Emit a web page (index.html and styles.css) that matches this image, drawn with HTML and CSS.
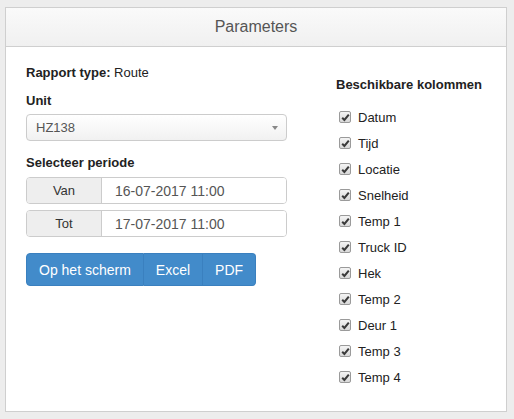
FILE: index.html
```html
<!DOCTYPE html>
<html>
<head>
<meta charset="utf-8">
<link rel="stylesheet" href="styles.css">
</head>
<body>
<div class="panel">
  <div class="panel-heading">Parameters</div>
  <div class="panel-body">
    <div class="col-left">
      <div class="report-type"><b>Rapport type:</b> Route</div>
      <div class="label label-unit">Unit</div>
      <div class="select">
        <span>HZ138</span>
        <span class="caret"></span>
      </div>
      <div class="label label-period">Selecteer periode</div>
      <div class="input-group">
        <span class="addon">Van</span>
        <span class="input">16-07-2017 11:00</span>
      </div>
      <div class="input-group second">
        <span class="addon">Tot</span>
        <span class="input">17-07-2017 11:00</span>
      </div>
      <div class="btn-group">
        <button class="btn">Op het scherm</button>
        <button class="btn">Excel</button>
        <button class="btn">PDF</button>
      </div>
    </div>
    <div class="col-right">
      <div class="label heading-cols">Beschikbare kolommen</div>
      <ul class="checks">
        <li><span class="cb"><svg viewBox="0 0 13 13" width="13" height="13"><path d="M3.2 6.8 L5.4 9 L9.8 3.6" fill="none" stroke="#3a3a3a" stroke-width="2"/></svg></span>Datum</li>
        <li><span class="cb"><svg viewBox="0 0 13 13" width="13" height="13"><path d="M3.2 6.8 L5.4 9 L9.8 3.6" fill="none" stroke="#3a3a3a" stroke-width="2"/></svg></span>Tijd</li>
        <li><span class="cb"><svg viewBox="0 0 13 13" width="13" height="13"><path d="M3.2 6.8 L5.4 9 L9.8 3.6" fill="none" stroke="#3a3a3a" stroke-width="2"/></svg></span>Locatie</li>
        <li><span class="cb"><svg viewBox="0 0 13 13" width="13" height="13"><path d="M3.2 6.8 L5.4 9 L9.8 3.6" fill="none" stroke="#3a3a3a" stroke-width="2"/></svg></span>Snelheid</li>
        <li><span class="cb"><svg viewBox="0 0 13 13" width="13" height="13"><path d="M3.2 6.8 L5.4 9 L9.8 3.6" fill="none" stroke="#3a3a3a" stroke-width="2"/></svg></span>Temp 1</li>
        <li><span class="cb"><svg viewBox="0 0 13 13" width="13" height="13"><path d="M3.2 6.8 L5.4 9 L9.8 3.6" fill="none" stroke="#3a3a3a" stroke-width="2"/></svg></span>Truck ID</li>
        <li><span class="cb"><svg viewBox="0 0 13 13" width="13" height="13"><path d="M3.2 6.8 L5.4 9 L9.8 3.6" fill="none" stroke="#3a3a3a" stroke-width="2"/></svg></span>Hek</li>
        <li><span class="cb"><svg viewBox="0 0 13 13" width="13" height="13"><path d="M3.2 6.8 L5.4 9 L9.8 3.6" fill="none" stroke="#3a3a3a" stroke-width="2"/></svg></span>Temp 2</li>
        <li><span class="cb"><svg viewBox="0 0 13 13" width="13" height="13"><path d="M3.2 6.8 L5.4 9 L9.8 3.6" fill="none" stroke="#3a3a3a" stroke-width="2"/></svg></span>Deur 1</li>
        <li><span class="cb"><svg viewBox="0 0 13 13" width="13" height="13"><path d="M3.2 6.8 L5.4 9 L9.8 3.6" fill="none" stroke="#3a3a3a" stroke-width="2"/></svg></span>Temp 3</li>
        <li><span class="cb"><svg viewBox="0 0 13 13" width="13" height="13"><path d="M3.2 6.8 L5.4 9 L9.8 3.6" fill="none" stroke="#3a3a3a" stroke-width="2"/></svg></span>Temp 4</li>
      </ul>
    </div>
  </div>
</div>
</body>
</html>
```

FILE: styles.css
```css
* { box-sizing: border-box; }
html, body {
  margin: 0;
  padding: 0;
  background: #ededed;
  font-family: "Liberation Sans", Arial, sans-serif;
  font-size: 13px;
  color: #222;
}
body {
  padding: 7px 7px 0 5px;
}
.panel {
  width: 502px;
  height: 405px;
  background: #fff;
  border: 1px solid #cfcfcf;
}
.panel-heading {
  height: 39px;
  border-bottom: 1px solid #cfcfcf;
  background: linear-gradient(#fafafa, #f0f0f0);
  color: #555;
  font-size: 16px;
  text-align: center;
  line-height: 38px;
}
.panel-body {
  display: grid;
  grid-template-columns: 261px 1fr;
  column-gap: 49px;
  padding: 17px 20px 0 20px;
}
.report-type {
  line-height: 18px;
}
.label {
  font-weight: bold;
  line-height: 18px;
}
.label-unit { margin-top: 10px; }
.select {
  margin-top: 4px;
  height: 27px;
  border: 1px solid #ccc;
  border-radius: 4px;
  background: linear-gradient(#ffffff, #f1f1f1);
  display: flex;
  align-items: center;
  justify-content: space-between;
  padding: 0 8px 0 9px;
  color: #555;
  font-size: 13px;
}
.caret {
  width: 0;
  height: 0;
  border-left: 3px solid transparent;
  border-right: 3px solid transparent;
  border-top: 4px solid #888;
  margin-top: 1px;
}
.label-period { margin-top: 13px; }
.input-group {
  margin-top: 5px;
  height: 27px;
  display: flex;
  border: 1px solid #ccc;
  border-radius: 4px;
  overflow: hidden;
}
.input-group.second { margin-top: 6px; }
.addon {
  width: 75px;
  background: #eee;
  border-right: 1px solid #ccc;
  display: flex;
  align-items: center;
  justify-content: center;
  font-size: 13px;
  color: #333;
}
.input {
  flex: 1;
  display: flex;
  align-items: center;
  padding-left: 13px;
  font-size: 14px;
  color: #555;
  background: #fff;
}
.btn-group {
  margin-top: 16px;
  display: flex;
}
.btn {
  height: 33px;
  padding: 0 12px;
  margin: 0;
  border: 1px solid #3a80bf;
  border-left-width: 0;
  background: #428bca;
  color: #fff;
  font-family: "Liberation Sans", Arial, sans-serif;
  font-size: 14px;
}
.btn:first-child {
  border-left-width: 1px;
  border-radius: 4px 0 0 4px;
}
.btn:last-child {
  border-radius: 0 4px 4px 0;
}
.heading-cols {
  margin-top: 12px;
}
.checks {
  list-style: none;
  margin: 10px 0 0 0;
  padding: 0;
}
.checks li {
  height: 26px;
  display: flex;
  align-items: center;
  gap: 7px;
  padding-left: 3px;
  color: #222;
}
.cb {
  width: 12px;
  height: 12px;
  border: 1px solid #9a9a9a;
  border-radius: 2px;
  background: linear-gradient(#f4f4f4, #d8d8d8);
  display: flex;
  align-items: center;
  justify-content: center;
  overflow: hidden;
}
.cb svg { display: block; flex: none; }
```
